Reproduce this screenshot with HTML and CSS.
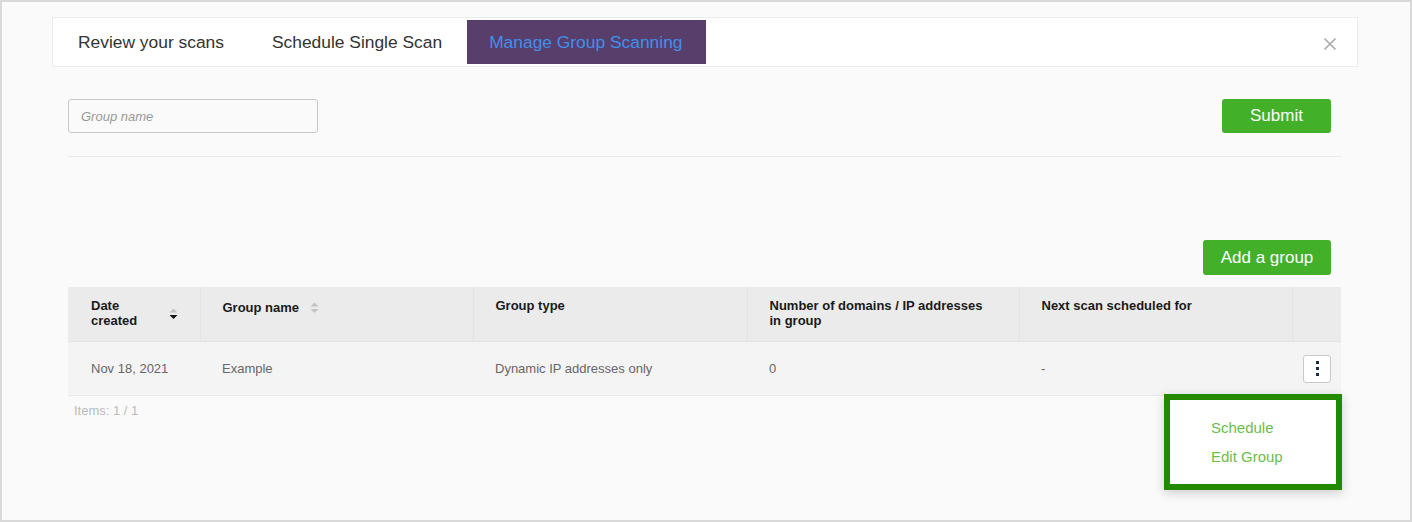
FILE: index.html
```html
<!DOCTYPE html>
<html lang="en">
<head>
<meta charset="utf-8">
<title>Manage Group Scanning</title>
<link rel="stylesheet" href="styles.css">
</head>
<body>
<div class="frame">
  <div class="tabbar">
    <div class="tab">Review your scans</div>
    <div class="tab">Schedule Single Scan</div>
    <div class="tab active">Manage Group Scanning</div>
    <div class="close">
      <svg width="14" height="14" viewBox="0 0 14 14"><path d="M1.5 1.5 L12.5 12.5 M12.5 1.5 L1.5 12.5" stroke="#a9a9a9" stroke-width="1.6" fill="none"/></svg>
    </div>
  </div>

  <div class="content">
    <div class="form-row">
      <input class="group-input" type="text" placeholder="Group name">
      <button class="btn btn-submit">Submit</button>
    </div>
    <div class="divider"></div>

    <div class="actions-row">
      <button class="btn btn-add">Add a group</button>
    </div>

    <div class="table-wrap">
      <table class="grid">
        <colgroup>
          <col class="c1"><col class="c2"><col class="c3"><col class="c4"><col class="c5"><col class="c6">
        </colgroup>
        <thead>
          <tr>
            <th>
              <div class="th-inner date-th">
                <span class="th-text narrow">Date created</span>
                <svg class="sort" width="9" height="12" viewBox="0 0 9 12"><path d="M4.5 0.5 L8.5 4.5 L0.5 4.5 Z" fill="#c3c3c3"/><path d="M0.5 7 L8.5 7 L4.5 11 Z" fill="#111"/></svg>
              </div>
            </th>
            <th class="th-name">
              <div class="th-inner">
                <span class="th-text">Group name</span>
                <svg class="sort gap" width="9" height="12" viewBox="0 0 9 12"><path d="M4.5 0.5 L8.5 4.5 L0.5 4.5 Z" fill="#c3c3c3"/><path d="M0.5 7 L8.5 7 L4.5 11 Z" fill="#c3c3c3"/></svg>
              </div>
            </th>
            <th><span class="th-text">Group type</span></th>
            <th><span class="th-text">Number of domains / IP addresses<br>in group</span></th>
            <th><span class="th-text">Next scan scheduled for</span></th>
            <th></th>
          </tr>
        </thead>
        <tbody>
          <tr>
            <td>Nov 18, 2021</td>
            <td>Example</td>
            <td>Dynamic IP addresses only</td>
            <td>0</td>
            <td>-</td>
            <td class="kebab-cell">
              <button class="kebab" aria-label="More actions"><span></span><span></span><span></span></button>
            </td>
          </tr>
        </tbody>
      </table>
      <div class="items">Items: 1 / 1</div>

      <div class="menu">
        <div class="menu-item">Schedule</div>
        <div class="menu-item">Edit Group</div>
      </div>
    </div>
  </div>
</div>
</body>
</html>
```

FILE: styles.css
```css
* { box-sizing: border-box; }

html, body {
  margin: 0;
  padding: 0;
}

body {
  font-family: "Liberation Sans", Arial, sans-serif;
  background: #fafafa;
}

.frame {
  width: 1412px;
  height: 522px;
  border: 2px solid #d9d9d9;
  background: #fafafa;
  padding: 15px 52px 0 50px;
}

.tabbar {
  display: flex;
  align-items: stretch;
  height: 50px;
  background: #fff;
  border: 1px solid #ececec;
  padding: 2px 0 2px 0;
}

.tab {
  display: flex;
  align-items: center;
  padding: 0 24px;
  font-size: 17.4px;
  color: #333;
  white-space: nowrap;
}

.tab:first-child { padding-left: 25px; }

.tab.active {
  background: #573e6b;
  color: #3f90ea;
  padding: 0 23px 0 22px;
  margin-left: 1px;
}

.close {
  margin-left: auto;
  display: flex;
  align-items: center;
  padding: 0 20px 0 0;
}
.close svg { margin-top: 4px; }

.content {
  padding: 0 17px 0 16px;
}

.form-row {
  display: flex;
  justify-content: space-between;
  align-items: center;
  margin-top: 32px;
  padding-right: 10px;
  height: 34px;
}

.group-input {
  width: 250px;
  height: 34px;
  border: 1px solid #c8c8c8;
  border-radius: 3px;
  background: #fafafa;
  padding: 0 12px;
  font-family: "Liberation Sans", Arial, sans-serif;
  font-size: 13px;
  outline: none;
}
.group-input::placeholder {
  color: #999;
  font-style: italic;
}

.btn {
  border: none;
  border-radius: 3px;
  background: #43b02a;
  color: #fff;
  font-family: "Liberation Sans", Arial, sans-serif;
  font-size: 17px;
  cursor: pointer;
}

.btn-submit {
  width: 109px;
  height: 34px;
}

.divider {
  margin-top: 23px;
  height: 1px;
  background: #e8e8e8;
}

.actions-row {
  display: flex;
  justify-content: flex-end;
  margin-top: 83px;
  padding-right: 10px;
}

.btn-add {
  width: 128px;
  height: 35px;
}

.table-wrap {
  position: relative;
  margin-top: 12px;
}

.grid {
  width: 100%;
  border-collapse: collapse;
  table-layout: fixed;
}

.c1 { width: 132px; }
.c2 { width: 273px; }
.c3 { width: 274px; }
.c4 { width: 272px; }
.c5 { width: 273px; }
.c6 { width: 49px; }

.grid th {
  background: #ebebeb;
  height: 54px;
  text-align: left;
  vertical-align: top;
  padding: 11px 22px 0 22px;
  font-size: 13px;
  font-weight: bold;
  color: #1a1a1a;
  line-height: 15px;
  border-left: 1px solid #e2e2e2;
  border-bottom: 1px solid #e2e2e2;
}
.grid th:first-child {
  border-left: none;
  padding-left: 23px;
}
.grid th.th-name {
  padding-top: 13px;
}

.th-inner {
  display: flex;
  align-items: center;
}
.th-text.narrow {
  width: 60px;
}
.date-th .sort {
  margin-left: auto;
  margin-top: 1px;
}
.sort.gap {
  margin-left: 11px;
}

.grid td {
  background: #f4f4f4;
  height: 54px;
  padding: 1px 22px 0 22px;
  font-size: 13px;
  color: #666;
  border-bottom: 1px solid #e8e8e8;
  white-space: nowrap;
}
.grid td:first-child { padding-left: 23px; }

.grid td.kebab-cell {
  padding: 1px 10px 0 0;
  text-align: right;
}

.kebab {
  width: 28px;
  height: 28px;
  background: #fff;
  border: 1px solid #c9c9c9;
  border-radius: 3px;
  display: inline-flex;
  flex-direction: column;
  align-items: center;
  justify-content: center;
  gap: 3px;
  padding: 0;
  vertical-align: middle;
}
.kebab span {
  width: 3px;
  height: 3px;
  background: #1b2a45;
  display: block;
}

.items {
  margin-top: 7px;
  padding-left: 6px;
  font-size: 13px;
  color: #bbb;
}

.menu {
  position: absolute;
  top: 107px;
  right: -1px;
  width: 178px;
  height: 96px;
  background: #fff;
  border: 6px solid #238900;
  box-shadow: 0 3px 10px rgba(0, 0, 0, 0.18);
  padding: 19px 0 0 41px;
}

.menu-item {
  font-size: 15px;
  line-height: 18px;
  color: #6dbd4a;
  margin-bottom: 11px;
}
```
